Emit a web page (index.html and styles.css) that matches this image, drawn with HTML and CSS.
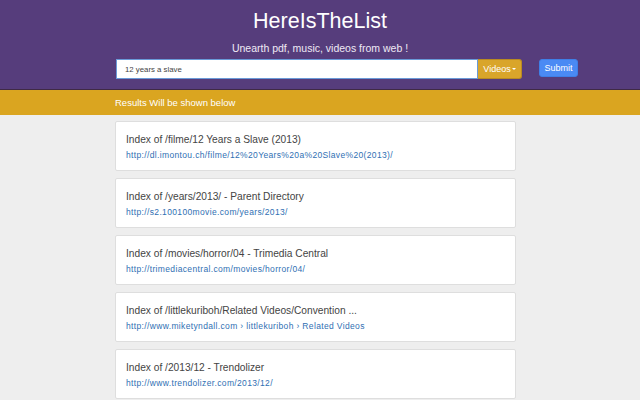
FILE: index.html
```html
<!DOCTYPE html>
<html>
<head>
<meta charset="utf-8">
<title>HereIsTheList</title>
<link rel="stylesheet" href="styles.css">
</head>
<body>
<header class="hero">
  <h1 class="brand">HereIsTheList</h1>
  <p class="tagline">Unearth pdf, music, videos from web !</p>
  <form class="search">
    <div class="search-group">
      <input class="search-input" type="text" value="12 years a slave">
      <button type="button" class="type-btn">Videos<span class="caret"></span></button>
    </div>
    <button type="button" class="submit-btn">Submit</button>
  </form>
</header>
<div class="results-bar">Results Will be shown below</div>
<main class="results">
  <div class="card">
    <div class="card-title">Index of /filme/12 Years a Slave (2013)</div>
    <a class="card-url" href="#">http://dl.imontou.ch/filme/12%20Years%20a%20Slave%20(2013)/</a>
  </div>
  <div class="card">
    <div class="card-title">Index of /years/2013/ - Parent Directory</div>
    <a class="card-url" href="#">http://s2.100100movie.com/years/2013/</a>
  </div>
  <div class="card">
    <div class="card-title">Index of /movies/horror/04 - Trimedia Central</div>
    <a class="card-url" href="#">http://trimediacentral.com/movies/horror/04/</a>
  </div>
  <div class="card">
    <div class="card-title">Index of /littlekuriboh/Related Videos/Convention ...</div>
    <a class="card-url" href="#">http://www.miketyndall.com › littlekuriboh › Related Videos</a>
  </div>
  <div class="card">
    <div class="card-title">Index of /2013/12 - Trendolizer</div>
    <a class="card-url" href="#">http://www.trendolizer.com/2013/12/</a>
  </div>
</main>
</body>
</html>
```

FILE: styles.css
```css
* { box-sizing: border-box; }
html, body { margin: 0; padding: 0; }
body {
  background: #eeeeee;
  font-family: "Liberation Sans", Arial, sans-serif;
  color: #333;
  height: 400px;
  overflow: hidden;
}
.hero {
  background: #563d7c;
  height: 90px;
  border-bottom: 1px solid #3f2a45;
  padding-top: 8px;
  text-align: center;
  color: #fff;
}
.brand {
  margin: 0;
  font-size: 21.5px;
  line-height: 26px;
  font-weight: normal;
}
.tagline {
  margin: 6px 0 0;
  font-size: 10.5px;
  line-height: 16px;
  color: #efeaf5;
}
.search {
  display: flex;
  align-items: flex-start;
  margin: 3px 0 0 116px;
}
.search-group {
  display: flex;
  height: 20px;
}
.search-input {
  width: 362px;
  height: 20px;
  border: 1px solid #6a9ad8;
  background: #fff;
  font-family: inherit;
  font-size: 7.8px;
  color: #444;
  padding: 0 8px;
  outline: none;
}
.type-btn {
  width: 44px;
  height: 20px;
  background: #d9a52a;
  border: 1px solid #b98a22;
  border-left: none;
  border-radius: 0 3px 3px 0;
  color: #fff;
  font-family: inherit;
  font-size: 9px;
  padding: 0;
  display: flex;
  align-items: center;
  justify-content: center;
}
.caret {
  display: inline-block;
  width: 0;
  height: 0;
  margin-left: 1px;
  border-left: 2px solid transparent;
  border-right: 2px solid transparent;
  border-top: 2px solid #fff;
}
.submit-btn {
  margin-left: 17px;
  width: 39px;
  height: 18px;
  background: #4a8af4;
  border: 1px solid #3f7fe6;
  border-radius: 3px;
  color: #fff;
  font-family: inherit;
  font-size: 9px;
  padding: 0;
}
.results-bar {
  background: #daa520;
  height: 25px;
  line-height: 25px;
  padding-left: 115px;
  color: #fff;
  font-size: 9.5px;
}
.results {
  padding: 6px 0 0 115px;
  display: flex;
  flex-direction: column;
  gap: 7px;
}
.card {
  width: 401px;
  height: 50px;
  background: #fff;
  border: 1px solid #dedede;
  border-radius: 2px;
  padding: 11px 10px 0;
}
.card-title {
  font-size: 10.2px;
  line-height: 14px;
  color: #444;
}
.card-url {
  display: block;
  margin-top: 2px;
  font-size: 8.5px;
  letter-spacing: 0.35px;
  line-height: 12px;
  color: #2f6fb3;
  text-decoration: none;
}
```
